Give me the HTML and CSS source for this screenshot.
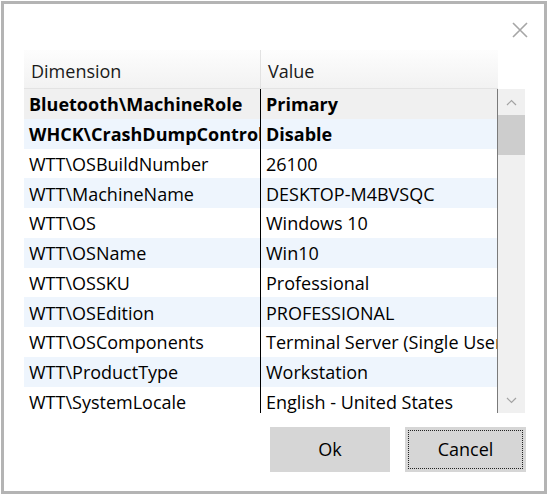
FILE: index.html
```html
<!DOCTYPE html>
<html>
<head>
<meta charset="utf-8">
<link rel="stylesheet" href="styles.css">
</head>
<body>
<div class="dialog">
  <div class="titlebar">
    <svg class="close" width="16" height="16" viewBox="0 0 16 16"><path d="M1 1 L15 15 M15 1 L1 15" stroke="#a6a6a6" stroke-width="1.6" fill="none"/></svg>
  </div>
  <div class="content">
    <div class="list">
      <div class="header">
        <div class="hcell c1">Dimension</div>
        <div class="hcell c2">Value</div>
      </div>
      <div class="body">
        <div class="rows">
          <div class="row sel bold"><div class="cell c1">Bluetooth\MachineRole</div><div class="cell c2">Primary</div></div>
          <div class="row alt bold"><div class="cell c1">WHCK\CrashDumpControl</div><div class="cell c2">Disable</div></div>
          <div class="row"><div class="cell c1">WTT\OSBuildNumber</div><div class="cell c2">26100</div></div>
          <div class="row alt"><div class="cell c1">WTT\MachineName</div><div class="cell c2">DESKTOP-M4BVSQC</div></div>
          <div class="row"><div class="cell c1">WTT\OS</div><div class="cell c2">Windows 10</div></div>
          <div class="row alt"><div class="cell c1">WTT\OSName</div><div class="cell c2">Win10</div></div>
          <div class="row"><div class="cell c1">WTT\OSSKU</div><div class="cell c2">Professional</div></div>
          <div class="row alt"><div class="cell c1">WTT\OSEdition</div><div class="cell c2">PROFESSIONAL</div></div>
          <div class="row"><div class="cell c1">WTT\OSComponents</div><div class="cell c2">Terminal Server (Single User)</div></div>
          <div class="row alt"><div class="cell c1">WTT\ProductType</div><div class="cell c2">Workstation</div></div>
          <div class="row"><div class="cell c1">WTT\SystemLocale</div><div class="cell c2">English - United States</div></div>
        </div>
        <div class="scrollbar">
          <div class="arrow"><svg width="11" height="7" viewBox="0 0 11 7"><path d="M1 6 L5.5 1.5 L10 6" stroke="#a3a3a3" stroke-width="1.2" fill="none"/></svg></div>
          <div class="track"><div class="thumb"></div></div>
          <div class="arrow"><svg width="11" height="7" viewBox="0 0 11 7"><path d="M1 1 L5.5 5.5 L10 1" stroke="#a3a3a3" stroke-width="1.2" fill="none"/></svg></div>
        </div>
      </div>
    </div>
    <div class="buttons">
      <div class="btn">Ok</div>
      <div class="btn focus"><span>Cancel</span></div>
    </div>
  </div>
</div>
</body>
</html>
```
FILE: styles.css
```css
html, body {
  margin: 0;
  padding: 0;
  background: #ffffff;
}
body {
  font-family: "Open Sans", "Noto Sans", sans-serif;
  font-size: 18px;
  color: #000;
}
.dialog {
  margin: 1px 0 0 1px;
  width: 546px;
  height: 493px;
  box-sizing: border-box;
  border: 3px solid #b4b4b4;
  display: flex;
  flex-direction: column;
  background: #fff;
}
.titlebar {
  height: 46px;
  display: flex;
  justify-content: flex-end;
  align-items: flex-start;
  padding: 18px 16px 0 0;
  box-sizing: border-box;
}
.close {
  display: block;
}
.content {
  padding: 0 18px 0 20px;
  display: flex;
  flex-direction: column;
}
.list {
  display: flex;
  flex-direction: column;
}
.header {
  display: grid;
  grid-template-columns: 237px 237px;
  height: 39px;
}
.hcell {
  display: flex;
  align-items: center;
  padding-left: 7px;
  padding-top: 3px;
  box-sizing: border-box;
  background: linear-gradient(#fdfdfd, #f2f2f2);
  border-bottom: 1px solid #e3e3e3;
  color: #1a1a1a;
}
.hcell.c1 {
  border-right: 1px solid #e2e2e2;
}
.body {
  display: flex;
  height: 324px;
  overflow: hidden;
}
.rows {
  width: 474px;
  display: flex;
  flex-direction: column;
}
.row {
  display: grid;
  grid-template-columns: 237px 237px;
  height: 29.75px;
  flex: none;
}
.row.alt {
  background: #eef5fd;
}
.row.sel {
  background: #f0f0f0;
}
.row.bold {
  font-weight: bold;
}
.cell {
  display: flex;
  align-items: center;
  padding-left: 5px;
  padding-top: 1px;
  white-space: nowrap;
  overflow: hidden;
  box-sizing: border-box;
}
.cell.c1 {
  border-right: 1px solid #000;
}
.cell.c2 {
  border-right: 1px solid #7a7a7a;
}
.scrollbar {
  width: 27px;
  background: #f0f0f0;
  display: flex;
  flex-direction: column;
}
.arrow {
  height: 26px;
  display: flex;
  align-items: center;
  justify-content: center;
  flex: none;
}
.track {
  flex: 1;
}
.thumb {
  height: 40px;
  background: #cdcdcd;
}
.buttons {
  display: flex;
  justify-content: flex-end;
  gap: 15px;
  margin-top: 14px;
}
.btn {
  width: 120px;
  height: 45px;
  background: #d6d6d6;
  display: flex;
  align-items: center;
  justify-content: center;
  box-sizing: border-box;
  padding-bottom: 2px;
}
.btn.focus {
  width: 121px;
  padding: 3px;
}
.btn.focus span {
  flex: 1;
  align-self: stretch;
  display: flex;
  align-items: center;
  justify-content: center;
  border: 1px dotted #222;
  padding-bottom: 2px;
}
```
